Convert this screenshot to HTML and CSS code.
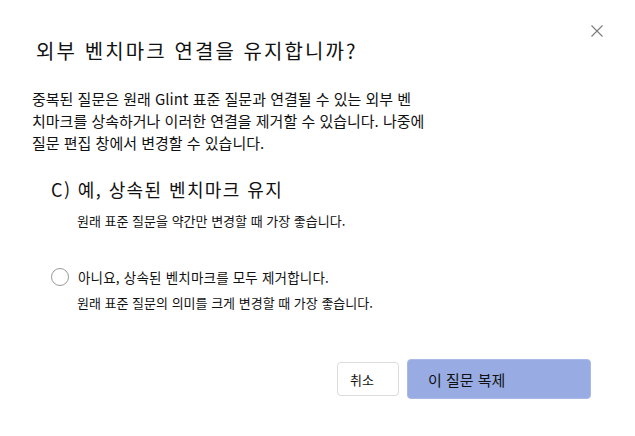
FILE: index.html
```html
<!DOCTYPE html>
<html lang="ko">
<head>
<meta charset="utf-8">
<title>외부 벤치마크 연결</title>
<link rel="stylesheet" href="styles.css">
</head>
<body>
<div class="dialog">
  <div class="header">
    <h1 class="title">외부 벤치마크 연결을 유지합니까?</h1>
    <button class="close" aria-label="닫기">
      <svg width="12" height="12" viewBox="0 0 12 12"><path d="M0.5 0.5 L11.5 11.5 M11.5 0.5 L0.5 11.5" stroke="#7a7a7a" stroke-width="1.1" fill="none"/></svg>
    </button>
  </div>
  <p class="desc">중복된 질문은 원래 Glint 표준 질문과 연결될 수 있는 외부 벤<br>치마크를 상속하거나 이러한 연결을 제거할 수 있습니다. 나중에<br>질문 편집 창에서 변경할 수 있습니다.</p>
  <div class="options">
    <div class="option">
      <div class="option-main">C) 예, 상속된 벤치마크 유지</div>
      <div class="option-hint">원래 표준 질문을 약간만 변경할 때 가장 좋습니다.</div>
    </div>
    <div class="option option-second">
      <label class="radio-row"><span class="radio"></span><span class="radio-text">아니요, 상속된 벤치마크를 모두 제거합니다.</span></label>
      <div class="option-hint hint-second">원래 표준 질문의 의미를 크게 변경할 때 가장 좋습니다.</div>
    </div>
  </div>
  <div class="actions">
    <button class="btn btn-cancel">취소</button>
    <button class="btn btn-primary">이 질문 복제</button>
  </div>
</div>
</body>
</html>
```
FILE: styles.css
```css
html, body {
  margin: 0;
  padding: 0;
  background: #ffffff;
}
body {
  font-family: "Noto Sans CJK KR", "Noto Sans", sans-serif;
  color: #111111;
}
.dialog {
  width: 635px;
  height: 436px;
  box-sizing: border-box;
  padding: 25px 32px 0 32px;
}
.header {
  display: flex;
  justify-content: space-between;
  align-items: flex-start;
}
.title {
  margin: 12px 0 0 4px;
  font-size: 20px;
  line-height: 28px;
  font-weight: 400;
  letter-spacing: 2.1px;
}
.close {
  border: 0;
  background: transparent;
  padding: 0;
  width: 12px;
  height: 12px;
  display: block;
}
.close svg { display: block; }
.desc {
  margin: 23px 0 0 0;
  font-size: 15px;
  line-height: 22px;
}
.options {
  padding-left: 19px;
  margin-top: 23px;
}
.option-main {
  font-size: 18px;
  line-height: 24px;
  letter-spacing: 1.4px;
}
.option-hint {
  margin: 11px 0 0 26px;
  font-size: 13px;
  line-height: 18px;
}
.option-second {
  margin-top: 37px;
}
.radio-row {
  display: flex;
  align-items: center;
  gap: 9px;
  height: 20px;
}
.radio {
  width: 16px;
  height: 16px;
  border: 1px solid #9a9a9a;
  border-radius: 50%;
  flex: none;
}
.radio-text {
  font-size: 13.5px;
  line-height: 20px;
  letter-spacing: 0.2px;
}
.hint-second {
  margin-top: 7px;
}
.actions {
  display: flex;
  justify-content: flex-end;
  align-items: center;
  gap: 8px;
  margin-top: 47px;
  padding-right: 12px;
}
.btn {
  font-family: "Noto Sans CJK KR", "Noto Sans", sans-serif;
  color: #111111;
  text-align: left;
  box-sizing: border-box;
  margin: 0;
}
.btn-cancel {
  width: 62px;
  height: 34px;
  background: #ffffff;
  border: 1px solid #dcdcdc;
  border-radius: 4px;
  font-size: 13px;
  padding: 0 0 0 12px;
}
.btn-primary {
  width: 184px;
  height: 40px;
  background: #98ace3;
  border: 1px solid #a9b9e8;
  border-radius: 4px;
  font-size: 15px;
  padding: 0 0 0 20px;
}
```
